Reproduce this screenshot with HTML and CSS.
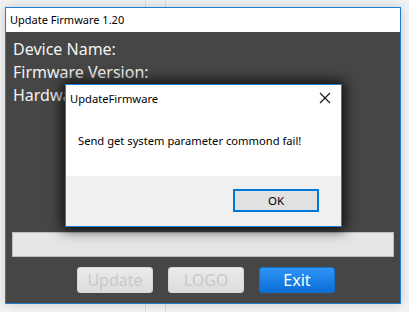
FILE: index.html
```html
<!DOCTYPE html>
<html lang="en">

<head>
  <meta charset="UTF-8">
  <title>Update Firmware 1.20</title>
  <link rel="stylesheet" href="styles.css">
</head>

<body>
  <div class="window">
    <div class="titlebar">Update Firmware 1.20</div>
    <div class="content">
      <div class="info">
        <div class="row">Device Name:</div>
        <div class="row">Firmware Version:</div>
        <div class="row">Hardware Version:</div>
      </div>
      <div class="progress"></div>
      <div class="actions">
        <button class="btn" disabled>Update</button>
        <button class="btn" disabled>LOGO</button>
        <button class="btn primary">Exit</button>
      </div>
    </div>
  </div>

  <div class="dialog">
    <div class="dlg-head">
      <span>UpdateFirmware</span>
      <svg class="close" viewBox="0 0 12 12" width="12" height="12">
        <path d="M1 1 L11 11 M11 1 L1 11" stroke="#111" stroke-width="1.1" fill="none" />
      </svg>
    </div>
    <div class="dlg-body">Send get system parameter commond fail!</div>
    <div class="dlg-foot">
      <button class="ok">OK</button>
    </div>
  </div>
</body>

</html>
```

FILE: styles.css
```css
body {
  margin: 0;
  width: 409px;
  height: 312px;
  overflow: hidden;
  position: relative;
  background-color: #f2f3f4;
  background-image:
    linear-gradient(#cfe0ef, #cfe0ef),
    linear-gradient(#cfe0ef, #cfe0ef);
  background-size: 1px 312px, 1px 312px;
  background-position: 145px 0, 165px 0;
  background-repeat: no-repeat;
  font-family: "Noto Sans", "Open Sans", sans-serif;
}

.window {
  margin: 7px 0 0 5px;
  width: 394px;
  height: 295px;
  border: 1px solid #1b7fd6;
  display: flex;
  flex-direction: column;
  box-shadow: 0 0 10px rgba(0, 0, 0, 0.18);
}

.titlebar {
  height: 24px;
  background: #fff;
  font-size: 11px;
  line-height: 23px;
  padding-left: 4px;
  color: #000;
}

.content {
  flex: 1;
  background: #464646;
  display: flex;
  flex-direction: column;
  padding: 6px 6px 10px 6px;
}

.info {
  flex: 1;
}

.row {
  color: #f2f2f2;
  font-size: 16px;
  line-height: 23px;
  padding-left: 1px;
  white-space: nowrap;
}

.progress {
  height: 23px;
  background: #e6e6e6;
  border: 1px solid #bcbcbc;
  margin-bottom: 10px;
}

.actions {
  display: flex;
  gap: 15px;
  padding-left: 65px;
}

.btn {
  width: 76px;
  height: 26px;
  border: 1px solid #d6d6d6;
  border-radius: 3px;
  background: linear-gradient(#ebebeb, #dcdcdc);
  color: #c9c9c9;
  font-family: inherit;
  font-size: 16px;
  padding: 0;
}

.primary {
  border-color: #1470c8;
  background: linear-gradient(#2f93f6, #0a6ed6);
  color: #fff;
}

.dialog {
  position: absolute;
  left: 65px;
  top: 84px;
  width: 275px;
  height: 141px;
  border: 1px solid #1c7ed4;
  background: #fff;
  box-shadow: 0 0 12px 3px rgba(0, 0, 0, 0.8);
  display: flex;
  flex-direction: column;
  font-size: 11.2px;
  color: #000;
}

.dlg-head {
  height: 26px;
  display: flex;
  align-items: center;
  justify-content: space-between;
  padding: 0 10px 0 4px;
}

.dlg-body {
  flex: 1;
  padding: 10px 0 0 12px;
  line-height: 40px;
}

.dlg-foot {
  height: 50px;
  background: #f0f0f0;
  display: flex;
  justify-content: flex-end;
  align-items: flex-start;
  padding: 13px 22px 0 0;
  box-sizing: border-box;
}

.ok {
  width: 86px;
  height: 23px;
  border: 2px solid #0078d7;
  background: #e1e1e1;
  font-family: inherit;
  font-size: 11.5px;
  padding: 0;
}
```
